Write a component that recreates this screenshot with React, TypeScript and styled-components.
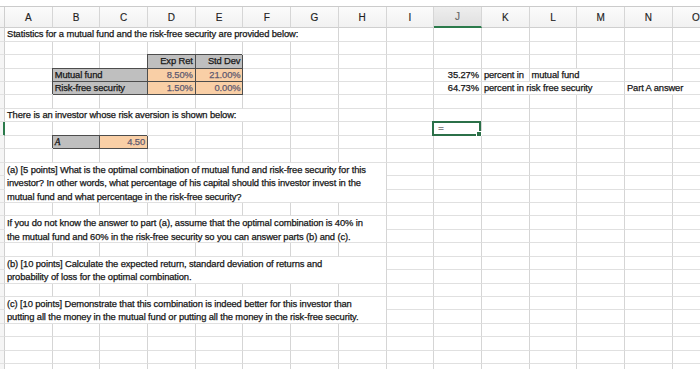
import React from 'react';
import styled, { createGlobalStyle, css } from 'styled-components';

const COLS = ['A', 'B', 'C', 'D', 'E', 'F', 'G', 'H', 'I', 'J', 'K', 'L', 'M', 'N', 'O'];
const ROW_COUNT = 26;
const COL_W = 47.7;
const ROW_H = 13.45;
const ACTIVE_COL = 10; // J
const ACTIVE_ROW = 8;

type Fill = 'gray' | 'orange';

type CellT = {
  row: number;
  col: number;
  span?: number;
  rowSpan?: number;
  text?: string;
  lines?: string[];
  align?: 'left' | 'right';
  fill?: Fill;
  boxed?: boolean;
  italic?: boolean;
  selected?: boolean;
};

const content: CellT[] = [
  { row: 1, col: 1, span: 7, text: 'Statistics for a mutual fund and the risk-free security are provided below:' },
  { row: 3, col: 4, text: 'Exp Ret', align: 'right', fill: 'gray', boxed: true },
  { row: 3, col: 5, text: 'Std Dev', align: 'right', fill: 'gray', boxed: true },
  { row: 4, col: 2, span: 2, text: 'Mutual fund', fill: 'gray', boxed: true },
  { row: 4, col: 4, text: '8.50%', align: 'right', fill: 'orange', boxed: true },
  { row: 4, col: 5, text: '21.00%', align: 'right', fill: 'orange', boxed: true },
  { row: 4, col: 10, text: '35.27%', align: 'right' },
  { row: 4, col: 11, text: 'percent in' },
  { row: 4, col: 12, span: 2, text: 'mutual fund' },
  { row: 5, col: 2, span: 2, text: 'Risk-free security', fill: 'gray', boxed: true },
  { row: 5, col: 4, text: '1.50%', align: 'right', fill: 'orange', boxed: true },
  { row: 5, col: 5, text: '0.00%', align: 'right', fill: 'orange', boxed: true },
  { row: 5, col: 10, text: '64.73%', align: 'right' },
  { row: 5, col: 11, span: 3, text: 'percent in risk free security' },
  { row: 5, col: 14, span: 2, text: 'Part A answer' },
  { row: 7, col: 1, span: 6, text: 'There is an investor whose risk aversion is shown below:' },
  { row: 8, col: 10, text: '=', selected: true },
  { row: 9, col: 2, text: 'A', fill: 'gray', boxed: true, italic: true },
  { row: 9, col: 3, text: '4.50', align: 'right', fill: 'orange', boxed: true },
  {
    row: 11,
    col: 1,
    span: 8,
    rowSpan: 3,
    lines: [
      '(a) [5 points] What is the optimal combination of mutual fund and risk-free security for this',
      'investor? In other words, what percentage of his capital should this investor invest in the',
      'mutual fund and what percentage in the risk-free security?',
    ],
  },
  {
    row: 15,
    col: 1,
    span: 8,
    rowSpan: 2,
    lines: [
      'If you do not know the answer to part (a), assume that the optimal combination is 40% in',
      'the mutual fund and 60% in the risk-free security so you can answer parts (b) and (c).',
    ],
  },
  {
    row: 18,
    col: 1,
    span: 8,
    rowSpan: 2,
    lines: [
      '(b) [10 points] Calculate the expected return, standard deviation of returns and',
      'probability of loss for the optimal combination.',
    ],
  },
  {
    row: 21,
    col: 1,
    span: 8,
    rowSpan: 2,
    lines: [
      '(c) [10 points] Demonstrate that this combination is indeed better for this investor than',
      'putting all the money in the mutual fund or putting all the money in the risk-free security.',
    ],
  },
];

function buildCells(): CellT[] {
  const taken = new Set<string>();
  content.forEach((c) => {
    for (let r = c.row; r < c.row + (c.rowSpan || 1); r++)
      for (let k = c.col; k < c.col + (c.span || 1); k++) taken.add(`${r}:${k}`);
  });
  const all: CellT[] = [...content];
  for (let r = 1; r <= ROW_COUNT; r++)
    for (let k = 1; k <= COLS.length; k++) if (!taken.has(`${r}:${k}`)) all.push({ row: r, col: k });
  return all.sort((a, b) => a.row - b.row || a.col - b.col);
}

const GlobalStyle = createGlobalStyle`
  html, body {
    margin: 0;
    padding: 0;
    background: #fff;
    overflow: hidden;
  }
  body {
    font-family: 'Liberation Sans', Arial, sans-serif;
  }
`;

const Window = styled.div`
  width: 700px;
  height: 369px;
  overflow: hidden;
  background: #fff;
  display: flex;
  flex-direction: column;
`;

const FormulaStrip = styled.div`
  flex: none;
  height: 6px;
  background: #fff;
  border-bottom: 1px solid #cbcbcb;
`;

const Sheet = styled.div`
  display: grid;
  grid-template-columns: 5px repeat(${COLS.length}, ${COL_W}px);
  grid-template-rows: 21.3px repeat(${ROW_COUNT}, ${ROW_H}px);
  width: max-content;
`;

const Corner = styled.div`
  box-sizing: border-box;
  background: linear-gradient(#fafafa, #f0f0f0);
  border-right: 1px solid #cfcfcf;
  border-bottom: 1px solid #cfcfcf;
`;

const ColHead = styled.div<{ $active?: boolean }>`
  box-sizing: border-box;
  display: flex;
  align-items: center;
  justify-content: center;
  font-size: 10px;
  -webkit-text-stroke: 0.15px currentColor;
  color: ${(p) => (p.$active ? '#666' : '#222')};
  background: ${(p) => (p.$active ? 'linear-gradient(#eeeeee, #e0e0e0)' : 'linear-gradient(#fbfbfb, #f1f1f1)')};
  border-right: 1px solid #d6d6d6;
  border-bottom: ${(p) => (p.$active ? '2px solid #2b7a4b' : '1px solid #cfcfcf')};
`;

const RowHead = styled.div<{ $active?: boolean }>`
  box-sizing: border-box;
  background: #f5f5f5;
  border-right: 1px solid ${(p) => (p.$active ? '#2b7a4b' : '#cfcfcf')};
  border-bottom: 1px solid #e2e2e2;
  ${(p) => p.$active && css`box-shadow: inset -1px 0 0 #2b7a4b;`}
`;

const fills: Record<Fill, string> = {
  gray: '#bfbfbf',
  orange: '#f9cfa6',
};

const Cell = styled.div<{
  $col: number;
  $row: number;
  $span: number;
  $rowSpan: number;
  $fill?: Fill;
  $boxed?: boolean;
  $align?: 'left' | 'right';
  $italic?: boolean;
}>`
  grid-column: ${(p) => p.$col + 1} / span ${(p) => p.$span};
  grid-row: ${(p) => p.$row + 1} / span ${(p) => p.$rowSpan};
  position: relative;
  box-sizing: border-box;
  padding: 0 2px;
  background: ${(p) => (p.$fill ? fills[p.$fill] : '#fff')};
  border-right: 1px solid ${(p) => (p.$boxed ? '#4d4d4d' : '#d5d5d5')};
  border-bottom: 1px solid ${(p) => (p.$boxed ? '#4d4d4d' : '#e0e0e0')};
  ${(p) => p.$boxed && css`box-shadow: -1px -1px 0 0 #4d4d4d;`}
  font-size: 9.4px;
  letter-spacing: -0.12px;
  -webkit-text-stroke: 0.25px currentColor;
  line-height: ${ROW_H - 1}px;
  white-space: nowrap;
  text-align: ${(p) => p.$align || 'left'};
  font-style: ${(p) => (p.$italic ? 'italic' : 'normal')};
  font-family: ${(p) => (p.$italic ? "'Liberation Serif', 'Times New Roman', serif" : "'Liberation Sans', Arial, sans-serif")};
  color: ${(p) => (p.$fill === 'orange' ? '#5f5a70' : '#161616')};
`;

const Line = styled.div`
  height: ${ROW_H}px;
  line-height: ${ROW_H}px;
`;

const Selection = styled.div`
  position: absolute;
  top: -1px;
  left: -2px;
  right: 0;
  bottom: -1px;
  border: 2px solid #2b7048;
  pointer-events: none;
  &::after {
    content: '';
    position: absolute;
    right: -3px;
    bottom: -3px;
    width: 4px;
    height: 4px;
    background: #2b7048;
    border: 1px solid #fff;
  }
`;

const FormulaText = styled.span`
  color: #6b6b6b;
  padding-left: 2px;
`;

export default function App() {
  const cells = buildCells();
  return (
    <Window>
      <GlobalStyle />
      <FormulaStrip />
      <Sheet>
        <Corner />
        {COLS.map((c, i) => (
          <ColHead key={c} $active={i + 1 === ACTIVE_COL}>
            {c}
          </ColHead>
        ))}
        {Array.from({ length: ROW_COUNT }, (_, i) => (
          <RowHead key={`rh${i}`} $active={i + 1 === ACTIVE_ROW} style={{ gridRow: i + 2, gridColumn: 1 }} />
        ))}
        {cells.map((c) => (
          <Cell
            key={`${c.row}-${c.col}`}
            $col={c.col}
            $row={c.row}
            $span={c.span || 1}
            $rowSpan={c.rowSpan || 1}
            $fill={c.fill}
            $boxed={c.boxed}
            $align={c.align}
            $italic={c.italic}
          >
            {c.lines ? c.lines.map((l) => <Line key={l}>{l}</Line>) : null}
            {c.selected ? (
              <>
                <FormulaText>{c.text}</FormulaText>
                <Selection />
              </>
            ) : (
              c.text
            )}
          </Cell>
        ))}
      </Sheet>
    </Window>
  );
}
